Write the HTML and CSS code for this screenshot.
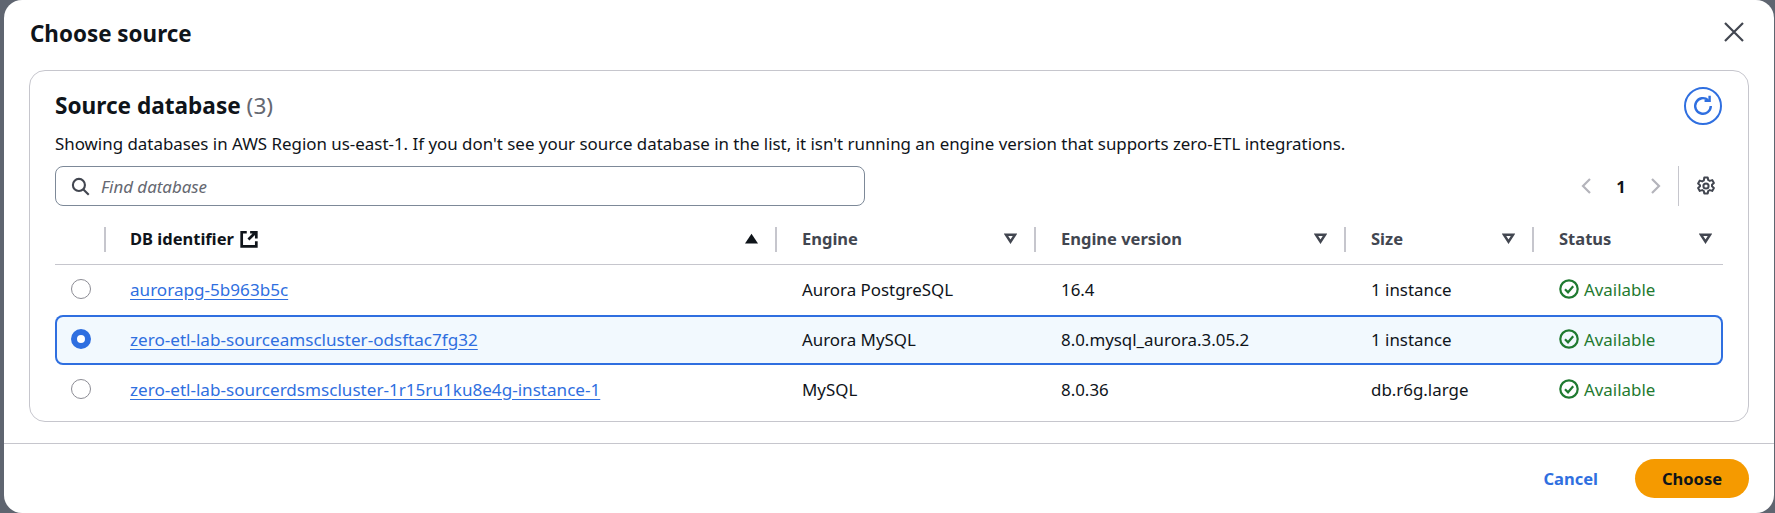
FILE: index.html
```html
<!DOCTYPE html>
<html>
<head>
	<meta charset="UTF-8">
	<title>Choose source</title>
	<link rel="stylesheet" href="styles.css">
</head>
<body>
	<div class="modal">
		<div class="modal-head">
			<h1>Choose source</h1>
			<svg class="close" viewBox="0 0 20 20"><path d="M1 1l18 18M19 1L1 19"/></svg>
		</div>
		<div class="card">
			<div class="card-title">
				<h2>Source database <span class="count">(3)</span></h2>
				<span class="refresh">
					<svg viewBox="0 0 20 20"><path d="M16.5 10a6.5 6.5 0 1 1-2.2-4.900"/><path d="M15.500 1.500v4.200h-4.200"/></svg>
				</span>
			</div>
			<p class="desc">Showing databases in AWS Region us-east-1. If you don't see your source database in the list, it isn't running an engine version that supports zero-ETL integrations.</p>
			<div class="tools">
				<div class="search">
					<svg viewBox="0 0 18 18"><circle cx="7.500" cy="7.500" r="5.700"/><path d="M11.800 11.800l5 5"/></svg>
					<span>Find database</span>
				</div>
				<div class="pager">
					<svg class="chev" viewBox="0 0 12 18"><path d="M10 2L3 9l7 7"/></svg>
					<b>1</b>
					<svg class="chev" viewBox="0 0 12 18"><path d="M2 2l7 7-7 7"/></svg>
				</div>
				<div class="prefs">
					<svg viewBox="0 0 20 20"><path d="M8.300 1.500h3.400l.5 2.500 1.600.9 2.400-.8 1.700 3-1.900 1.600v1.600l1.900 1.600-1.700 3-2.400-.8-1.600.9-.5 2.500H8.300l-.5-2.500-1.600-.9-2.400.8-1.700-3 1.900-1.600V9.200L2.100 7.600l1.700-3 2.400.8 1.600-.9z"/><circle cx="10" cy="10" r="2.600"/></svg>
				</div>
			</div>
			<div class="row head">
				<div class="cell"></div>
				<div class="cell sorted">
					<span class="label">DB identifier
						<svg class="ext" viewBox="0 0 16 16"><path d="M6 2H1.500v12.500h13V10"/><path d="M9 2h5.500v5.500M14 2L7.500 8.500"/></svg>
					</span>
					<svg class="sort" viewBox="0 0 12 10"><path class="on" d="M6 .5l6 9H0z"/></svg>
				</div>
				<div class="cell">
					<span class="label">Engine</span>
					<svg class="sort" viewBox="0 0 12 10"><path d="M1.800 1.500h8.400L6 8z"/></svg>
				</div>
				<div class="cell">
					<span class="label">Engine version</span>
					<svg class="sort" viewBox="0 0 12 10"><path d="M1.800 1.500h8.400L6 8z"/></svg>
				</div>
				<div class="cell">
					<span class="label">Size</span>
					<svg class="sort" viewBox="0 0 12 10"><path d="M1.800 1.500h8.400L6 8z"/></svg>
				</div>
				<div class="cell">
					<span class="label">Status</span>
					<svg class="sort" viewBox="0 0 12 10"><path d="M1.800 1.500h8.400L6 8z"/></svg>
				</div>
			</div>
			<div class="row item">
				<div class="cell"><span class="radio"></span></div>
				<div class="cell"><a href="#">aurorapg-5b963b5c</a></div>
				<div class="cell">Aurora PostgreSQL</div>
				<div class="cell">16.4</div>
				<div class="cell">1 instance</div>
				<div class="cell status">
					<svg viewBox="0 0 20 20"><circle cx="10" cy="10" r="8.700"/><path d="M6 10.300l3 3 5.200-6"/></svg>Available
				</div>
			</div>
			<div class="row item selected">
				<div class="cell"><span class="radio"></span></div>
				<div class="cell"><a href="#">zero-etl-lab-sourceamscluster-odsftac7fg32</a></div>
				<div class="cell">Aurora MySQL</div>
				<div class="cell">8.0.mysql_aurora.3.05.2</div>
				<div class="cell">1 instance</div>
				<div class="cell status">
					<svg viewBox="0 0 20 20"><circle cx="10" cy="10" r="8.700"/><path d="M6 10.300l3 3 5.200-6"/></svg>Available
				</div>
			</div>
			<div class="row item">
				<div class="cell"><span class="radio"></span></div>
				<div class="cell"><a href="#">zero-etl-lab-sourcerdsmscluster-1r15ru1ku8e4g-instance-1</a></div>
				<div class="cell">MySQL</div>
				<div class="cell">8.0.36</div>
				<div class="cell">db.r6g.large</div>
				<div class="cell status">
					<svg viewBox="0 0 20 20"><circle cx="10" cy="10" r="8.700"/><path d="M6 10.300l3 3 5.200-6"/></svg>Available
				</div>
			</div>
		</div>
		<div class="modal-foot">
			<a class="cancel" href="#">Cancel</a>
			<a class="choose" href="#">Choose</a>
		</div>
	</div>
</body>
</html>
```

FILE: styles.css
```css
*{
	box-sizing:border-box;
}

html,body{
	height:100%;
}

body{
	margin:0;
	padding:0 1px 0 4px;
	background:#5f6570;
	font-family:"Noto Sans",sans-serif;
	font-size:16.9px;
	color:#0f141a;
	overflow:hidden;
}

svg{
	display:block;
	fill:none;
}

.modal{
	height:513px;
	background:#fff;
	border-radius:18px;
	display:flex;
	flex-direction:column;
}

.modal-head{
	height:70px;
	padding:0 30px 0 26px;
	display:flex;
	justify-content:space-between;
	align-items:center;
}

h1{
	margin:0;
	font-size:22.4px;
	font-weight:700;
	margin-bottom:3px;
}

.close{
	width:20px;
	height:20px;
	margin-bottom:7px;
	stroke:#424650;
	stroke-width:2.2;
}

.card{
	height:352px;
	margin:0 25.5px 0 24.5px;
	padding:0 24.5px 0 25.5px;
	border:1px solid #c6c6cd;
	border-radius:16px;
}

.card-title{
	height:71px;
	padding-top:16px;
	display:flex;
	justify-content:space-between;
}

h2{
	margin:1px 0 0;
	font-size:22.6px;
	font-weight:700;
	line-height:36px;
}

.count{
	font-weight:400;
	color:#656871;
}

.refresh{
	width:38px;
	height:38px;
	margin-right:1px;
	border:2px solid #2f6fe0;
	border-radius:50%;
	display:flex;
	align-items:center;
	justify-content:center;
}

.refresh svg{
	width:24px;
	height:24px;
	stroke:#2f6fe0;
	stroke-width:2;
}

.desc{
	margin:-10px 0 0;
	height:34px;
	line-height:24px;
}

.tools{
	height:40px;
	display:flex;
	align-items:center;
}

.search{
	width:810px;
	height:40px;
	border:1px solid #7d8998;
	border-radius:8px;
	padding-left:15px;
	display:flex;
	align-items:center;
	gap:11px;
	font-style:italic;
	color:#656871;
}

.search svg{
	width:19px;
	height:19px;
	stroke:#424650;
	stroke-width:2;
}

.pager{
	margin-left:auto;
	width:114px;
	display:flex;
	align-items:center;
	justify-content:space-between;
	padding:0 16px;
}

.pager b{
	font-size:16.5px;
}

.chev{
	width:12px;
	height:18px;
	stroke:#b4b4bb;
	stroke-width:2.2;
}

.prefs{
	height:40px;
	width:45px;
	border-left:1px solid #c6c6cd;
	display:flex;
	align-items:center;
	padding-left:17px;
}

.prefs svg{
	width:20px;
	height:20px;
	stroke:#424650;
	stroke-width:2;
	stroke-linejoin:round;
}

.row{
	display:grid;
	grid-template-columns:49px 671px 259px 310px 188px 191px;
}

.head{
	height:59px;
	border-bottom:1px solid #c6c6cd;
	padding-top:21px;
	align-items:start;
}

.head .cell{
	height:25px;
	display:flex;
	align-items:center;
	justify-content:space-between;
	border-left:2px solid #c6c6cd;
	padding:0 17px 2px 25px;
	font-size:16.5px;
	font-weight:700;
	color:#424650;
}

.head .cell:first-child{
	border-left:0;
}

.head .cell:last-child{
	padding-right:11px;
}

.head .sorted{
	color:#0f141a;
	padding-left:24px;
}

.label{
	display:flex;
	align-items:center;
	gap:6px;
}

.ext{
	width:18px;
	height:18px;
	stroke:#0f141a;
	stroke-width:2.4;
}

.sort{
	width:13px;
	height:11px;
	stroke:#424650;
	stroke-width:2.2;
}

.sort .on{
	fill:#0f141a;
	stroke:none;
}

.item{
	height:50px;
	align-items:center;
}

.item .cell{
	padding:0 0 2px 27px;
}

.item .cell:first-child{
	padding-left:16px;
}

.item .cell:nth-child(2){
	padding-left:26px;
}

.item a{
	font-size:17.1px;
	color:#2f6fe0;
	text-decoration:underline;
	text-underline-offset:3px;
}

.selected{
	background:#f2f9fe;
	box-shadow:inset 0 0 0 2px #2f6fe0;
	border-radius:8px;
}

.radio{
	display:block;
	width:20px;
	height:20px;
	border:1.5px solid #8c8c94;
	border-radius:50%;
}

.selected .radio{
	border:6px solid #2f6fe0;
	background:#fff;
}

.item .status{
	display:flex;
	align-items:center;
	gap:5px;
	padding:0 0 2px 27px;
	color:#1f7a30;
}

.status svg{
	width:20px;
	height:20px;
	stroke:#1f7a30;
	stroke-width:2.2;
}

.modal-foot{
	margin-top:21px;
	height:70px;
	border-top:1px solid #c6c6cd;
	padding:15px 25px 0 0;
	display:flex;
	justify-content:flex-end;
	align-items:flex-start;
	gap:37px;
}

.modal-foot a{
	font-size:16.5px;
	font-weight:700;
	text-decoration:none;
}

.cancel{
	color:#2f6fe0;
	line-height:39px;
}

.choose{
	width:114px;
	height:39px;
	line-height:39px;
	text-align:center;
	border-radius:20px;
	background:#f59a00;
	color:#0f141a;
}
```
